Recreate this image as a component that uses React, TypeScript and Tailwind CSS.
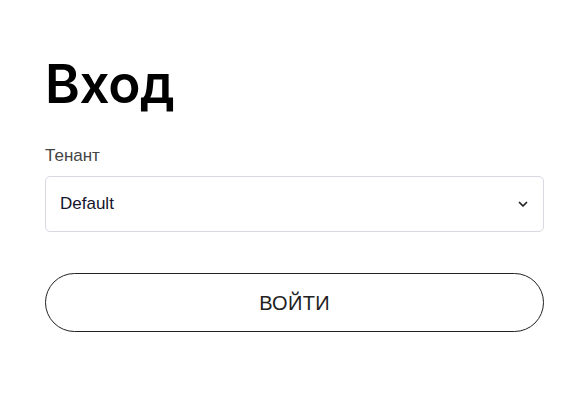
import React, { useState } from 'react';

const App: React.FC = () => {
  const [tenant, setTenant] = useState('Default');

  return (
    <div className="min-h-screen bg-white" style={{ fontFamily: '"Liberation Sans", Arial, sans-serif' }}>
      <div className="w-[499px] ml-[45px] pt-[54px]">
        <h1 className="text-[53px] leading-[60px] font-semibold text-black tracking-[-0.4px]" style={{ fontFamily: 'Inter, sans-serif' }}>
          Вход
        </h1>
        <div className="mt-[32px]">
          <label className="block text-[17px] leading-[20px] text-[#454545]">Тенант</label>
          <div className="relative mt-[10px]">
            <select
              value={tenant}
              onChange={(e) => setTenant(e.target.value)}
              className="w-full h-[56px] appearance-none rounded-[5px] border border-[#d8dae3] bg-white pl-[14px] pr-10 text-[17px] text-[#14142b] outline-none"
            >
              <option>Default</option>
            </select>
            <svg className="pointer-events-none absolute right-[15px] top-1/2 -translate-y-1/2" width="12" height="12" viewBox="0 0 24 24" fill="none" stroke="#222" strokeWidth="3.5" strokeLinecap="round" strokeLinejoin="round">
              <path d="M5 9l7 7 7-7" />
            </svg>
          </div>
        </div>
        <button className="mt-[41px] w-full h-[59px] rounded-full border border-[#222] bg-white text-[20px] text-[#222] tracking-[0.3px]">
          ВОЙТИ
        </button>
      </div>
    </div>
  );
};

export default App;
